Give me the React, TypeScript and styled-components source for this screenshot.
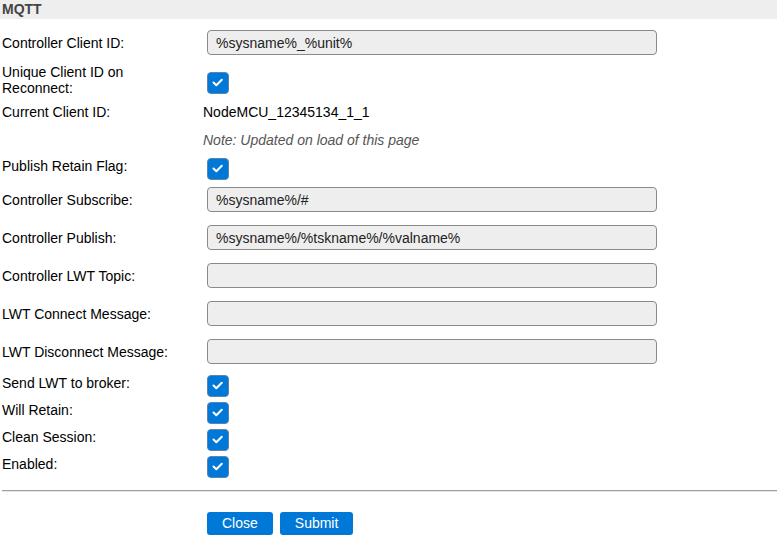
import React from 'react'
import styled, { createGlobalStyle } from 'styled-components'

const GlobalStyle = createGlobalStyle`
    html, body {
        margin: 0;
        padding: 0;
        background: #fff;
    }
    body {
        font-family: "Liberation Sans", Arial, sans-serif;
        font-size: 14px;
        color: #000;
    }
`

const StyledPage = styled.div`
    width: 777px;
    display: flex;
    flex-direction: column;
`

const StyledHeader = styled.div`
    height: 19px;
    background: #eee;
    color: #444;
    font-weight: bold;
    font-size: 14px;
    line-height: 16px;
    padding-left: 2px;
    display: flex;
    align-items: flex-start;
    padding-top: 1px;
    box-sizing: border-box;
`

const StyledRow = styled.div<{ $top: number; $align?: 'center' | 'start' }>`
    display: flex;
    align-items: ${p => (p.$align === 'start' ? 'flex-start' : 'center')};
    margin-top: ${p => p.$top}px;
`

const StyledLabel = styled.div`
    flex: 0 0 201px;
    box-sizing: border-box;
    padding-left: 2px;
    padding-right: 16px;
    line-height: 16px;
`

const StyledValue = styled.div`
    flex: 1;
    display: flex;
    align-items: center;
    line-height: 16px;
    padding-left: 2px;
`

const StyledNote = styled.span`
    font-style: italic;
    color: #555;
`

const StyledInput = styled.input`
    width: 450px;
    height: 25px;
    box-sizing: border-box;
    margin: 0 0 0 4px;
    padding: 0 8px;
    border: 1px solid #8a8a8a;
    border-radius: 4px;
    background: #eee;
    font-family: "Liberation Sans", Arial, sans-serif;
    font-size: 14px;
    color: #222;
    outline: none;
`

const StyledCheck = styled.span<{ $shift?: number }>`
    display: inline-flex;
    width: 22px;
    height: 22px;
    box-sizing: border-box;
    margin-left: 4px;
    margin-top: ${p => p.$shift ?? 0}px;
    border: 1px solid #5d84ad;
    border-radius: 4px;
    background: #0078d7;
    align-items: center;
    justify-content: center;
`

const StyledRule = styled.hr`
    margin: 12px 0 0 2px;
    height: 0;
    border: none;
    border-top: 1px solid #a0a0a0;
    border-bottom: 1px solid #e4e4e4;
`

const StyledButtons = styled.div`
    display: flex;
    gap: 7px;
    margin: 20px 0 0 207px;
`

const StyledButton = styled.button`
    height: 23px;
    padding: 0 15px;
    border: none;
    border-radius: 3px;
    background: #0078d7;
    color: #fff;
    font-family: "Liberation Sans", Arial, sans-serif;
    font-size: 14px;
    line-height: 23px;
    cursor: pointer;
`

const Checkbox = ({ shift }: { shift?: number }) => (
    <StyledCheck $shift={shift}>
        <svg width="20" height="20" viewBox="0 0 20 20">
            <polyline points="5.5,9.5 8.3,12.3 13.8,6.8" fill="none" stroke="#fff" strokeWidth="2" strokeLinecap="round" strokeLinejoin="round" />
        </svg>
    </StyledCheck>
)

const TextField = ({ value }: { value?: string }) => (
    <StyledInput type="text" defaultValue={value ?? ''} />
)

const App = () => {
    return (
        <StyledPage>
            <GlobalStyle />
            <StyledHeader>MQTT</StyledHeader>

            <StyledRow $top={11}>
                <StyledLabel>Controller Client ID:</StyledLabel>
                <StyledValue><TextField value="%sysname%_%unit%" /></StyledValue>
            </StyledRow>

            <StyledRow $top={9}>
                <StyledLabel>Unique Client ID on Reconnect:</StyledLabel>
                <StyledValue><Checkbox shift={5} /></StyledValue>
            </StyledRow>

            <StyledRow $top={8}>
                <StyledLabel>Current Client ID:</StyledLabel>
                <StyledValue>NodeMCU_12345134_1_1</StyledValue>
            </StyledRow>

            <StyledRow $top={12}>
                <StyledLabel></StyledLabel>
                <StyledValue><StyledNote>Note: Updated on load of this page</StyledNote></StyledValue>
            </StyledRow>

            <StyledRow $top={10} $align="start">
                <StyledLabel>Publish Retain Flag:</StyledLabel>
                <StyledValue><Checkbox /></StyledValue>
            </StyledRow>

            <StyledRow $top={7}>
                <StyledLabel>Controller Subscribe:</StyledLabel>
                <StyledValue><TextField value="%sysname%/#" /></StyledValue>
            </StyledRow>

            <StyledRow $top={13}>
                <StyledLabel>Controller Publish:</StyledLabel>
                <StyledValue><TextField value="%sysname%/%tskname%/%valname%" /></StyledValue>
            </StyledRow>

            <StyledRow $top={13}>
                <StyledLabel>Controller LWT Topic:</StyledLabel>
                <StyledValue><TextField /></StyledValue>
            </StyledRow>

            <StyledRow $top={13}>
                <StyledLabel>LWT Connect Message:</StyledLabel>
                <StyledValue><TextField /></StyledValue>
            </StyledRow>

            <StyledRow $top={13}>
                <StyledLabel>LWT Disconnect Message:</StyledLabel>
                <StyledValue><TextField /></StyledValue>
            </StyledRow>

            <StyledRow $top={11} $align="start">
                <StyledLabel>Send LWT to broker:</StyledLabel>
                <StyledValue><Checkbox /></StyledValue>
            </StyledRow>

            <StyledRow $top={5} $align="start">
                <StyledLabel>Will Retain:</StyledLabel>
                <StyledValue><Checkbox /></StyledValue>
            </StyledRow>

            <StyledRow $top={5} $align="start">
                <StyledLabel>Clean Session:</StyledLabel>
                <StyledValue><Checkbox /></StyledValue>
            </StyledRow>

            <StyledRow $top={5} $align="start">
                <StyledLabel>Enabled:</StyledLabel>
                <StyledValue><Checkbox /></StyledValue>
            </StyledRow>

            <StyledRule />

            <StyledButtons>
                <StyledButton>Close</StyledButton>
                <StyledButton>Submit</StyledButton>
            </StyledButtons>
        </StyledPage>
    )
}

export default App
